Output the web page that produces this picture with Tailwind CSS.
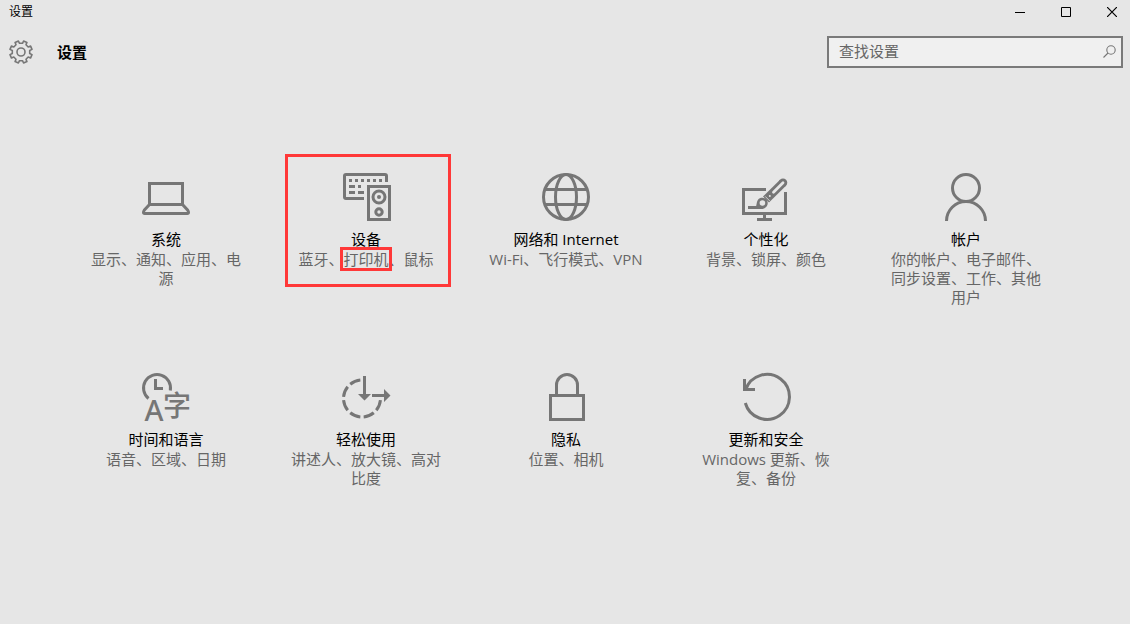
<!DOCTYPE html>
<html lang="zh-CN">
<head>
    <meta charset="UTF-8">
    <meta name="viewport" content="width=device-width, initial-scale=1.0">
    <title>设置</title>
    <script src="https://cdn.jsdelivr.net/npm/@tailwindcss/browser@4"></script>
</head>
<body class="min-h-screen bg-[#e6e6e6] text-black font-['Open_Sans','Noto_Sans_CJK_SC',sans-serif] text-[15px]">
    <!-- Title bar -->
    <div class="flex h-6 items-center justify-between pl-[9px]">
        <span class="text-xs">设置</span>
        <div class="flex gap-2.5">
            <button class="flex h-6 w-9 items-center justify-center" aria-label="最小化">
                <svg class="size-[10px]" viewBox="0 0 10 10" fill="none" stroke="#000"><path d="M0 5.5h10"/></svg>
            </button>
            <button class="flex h-6 w-9 items-center justify-center" aria-label="最大化">
                <svg class="size-[10px]" viewBox="0 0 10 10" fill="none" stroke="#000"><path d="M.5.5h9v9h-9z"/></svg>
            </button>
            <button class="flex h-6 w-9 items-center justify-center" aria-label="关闭">
                <svg class="size-[10px]" viewBox="0 0 10 10" fill="none" stroke="#000" stroke-width="1.2"><path d="M0 0l10 10M10 0L0 10"/></svg>
            </button>
        </div>
    </div>

    <!-- Header -->
    <header class="mt-3 flex h-8 items-center pl-[9px] pr-[7px]">
        <svg class="size-6" viewBox="0 0 24 24" fill="none" stroke="#767676" stroke-width="1.6" stroke-linejoin="round">
            <path d="M13.5 3.3L14.6 1L17.9 2.4L17 4.8L19.2 7L21.6 6.1L23 9.4L20.7 10.5V13.5L23 14.6L21.6 17.9L19.2 17L17 19.2L17.9 21.6L14.6 23L13.5 20.7H10.5L9.4 23L6.1 21.6L7 19.2L4.8 17L2.4 17.9L1 14.6L3.3 13.5V10.5L1 9.4L2.4 6.1L4.8 7L7 4.8L6.1 2.4L9.4 1L10.5 3.3Z"/>
            <circle cx="12" cy="12" r="4"/>
        </svg>
        <h1 class="ml-6 font-bold">设置</h1>
        <form class="relative ml-auto">
            <input type="search" aria-label="查找设置" placeholder="查找设置" class="block h-8 w-[296px] border-2 border-[#7a7a7a] bg-[#f0f0f0] pb-0.5 pl-2.5 pr-8 outline-none placeholder:text-[#666]">
            <svg class="absolute right-[7px] top-[9px] size-[13px]" viewBox="0 0 13 13" fill="none" stroke="#767676" stroke-width="1.1"><circle cx="8" cy="5" r="4.2"/><path d="M5 8L.5 12.5"/></svg>
        </form>
    </header>

    <!-- Categories -->
    <main class="mt-[105px] grid grid-cols-[repeat(auto-fill,200px)] auto-rows-[200px] pl-[66px] pr-16 text-center">
        <a href="#" class="relative flex flex-col items-center px-6">
            <svg class="size-12" viewBox="0 0 48 48" fill="none" stroke="#767676" stroke-width="3">
                <path d="M7.5 31.5v-21h33v21zM7.5 31.5L2.2 37.3Q1.5 38.2 1.5 39.3Q1.5 40.5 2.7 40.5H45.3Q46.5 40.5 46.5 39.3Q46.5 38.2 45.8 37.3L40.5 31.5"/>
            </svg>
            <h2 class="mt-2 mb-px leading-5">系统</h2>
            <p class="leading-[19px] text-[#666]">显示、通知、应用、电源</p>
        </a>

        <a href="#" class="relative flex flex-col items-center px-6">
            <span class="absolute -top-[19px] left-[19px] right-[15px] h-[133px] border-3 border-[#ff3838]"></span>
            <svg class="size-12 overflow-visible" viewBox="0 0 48 48" fill="none" stroke="#767676" stroke-width="3">
                <path d="M44.5 9V3Q44.5 1.5 43 1.5H4Q2.5 1.5 2.5 3V24Q2.5 25.5 4 25.5H22"/>
                <path fill="#767676" stroke="none" d="M7 6h3v3H7zM13 6h3v3h-3zM19 6h3v3h-3zM25 6h3v3h-3zM31 6h3v3h-3zM37 6h3v3h-3zM7 12h6v3H7zM16 12h3v3h-3zM7 18h6v3H7zM16 18h6v3h-6z"/>
                <path d="M26.5 13.5h21v33h-21z"/>
                <circle cx="37" cy="24" r="6"/>
                <circle cx="37" cy="24" r="2" fill="#767676" stroke="none"/>
                <circle cx="37" cy="39" r="3.2"/>
            </svg>
            <h2 class="mt-2 mb-px leading-5">设备</h2>
            <p class="leading-[19px] text-[#666]">蓝牙、<span class="relative">打印机<span class="absolute -inset-x-[3px] -inset-y-[2px] border-3 border-[#ff3838]"></span></span>、鼠标</p>
        </a>

        <a href="#" class="relative flex flex-col items-center px-5">
            <svg class="size-12" viewBox="0 0 48 48" fill="none" stroke="#767676" stroke-width="3">
                <circle cx="24" cy="24" r="22.5"/>
                <ellipse cx="24" cy="24" rx="10.5" ry="22.5"/>
                <path d="M3 16.5h42M3 31.5h42"/>
            </svg>
            <h2 class="mt-2 mb-px leading-5">网络和 Internet</h2>
            <p class="leading-[19px] whitespace-nowrap text-[#666]">Wi-Fi、飞行模式、VPN</p>
        </a>

        <a href="#" class="relative flex flex-col items-center px-6">
            <svg class="size-12" viewBox="0 0 48 48" fill="none" stroke="#767676" stroke-width="3">
                <path d="M24 16.5H1.5v24h42V19M22.5 40.5v6M15 46.5h15"/>
                <path d="M6 34.5h14"/>
                <path d="M24 26.5L41 9.8" stroke-width="8.5"/>
                <circle cx="41" cy="9.800" r="4.250" fill="#767676" stroke="none"/>
                <path d="M31.5 19.3L41 9.8" stroke="#e6e6e6" stroke-width="2.8" stroke-linecap="round"/>
                <path d="M23.200 23.400l4.600 4.600" stroke="#e6e6e6" stroke-width=".8"/>
                <circle cx="27.800" cy="23" r="1" fill="#e6e6e6" stroke="none"/>
                <path d="M12 35.500C15.500 33.500 13.800 30 16 26.800C18.200 24 22.500 24.200 24.800 27C27 30 25.400 36 19 36H12z" fill="#767676" stroke="none"/>
                <circle cx="20.400" cy="30" r="2.800" fill="#e6e6e6" stroke="none"/>
            </svg>
            <h2 class="mt-2 mb-px leading-5">个性化</h2>
            <p class="leading-[19px] text-[#666]">背景、锁屏、颜色</p>
        </a>

        <a href="#" class="relative flex flex-col items-center px-6">
            <svg class="size-12" viewBox="0 0 48 48" fill="none" stroke="#767676" stroke-width="3">
                <circle cx="24" cy="15" r="13.5"/>
                <path d="M4.500 48a19.500 19.500 0 0 1 39 0"/>
            </svg>
            <h2 class="mt-2 mb-px leading-5">帐户</h2>
            <p class="leading-[19px] text-[#666]">你的帐户、电子邮件、同步设置、工作、其他用户</p>
        </a>

        <a href="#" class="relative flex flex-col items-center px-6">
            <svg class="size-12 overflow-visible" viewBox="0 0 48 48" fill="none" stroke="#767676" stroke-width="3">
                <path d="M6.500 25.500A13.500 13.500 0 1 1 28.300 17.500M13.500 6v9.500H21"/>
                <text x="12" y="48" text-anchor="middle" font-family="Noto Sans" font-size="29" font-weight="500" fill="#767676" stroke="none">A</text>
                <text x="35" y="43" text-anchor="middle" font-family="Noto Sans CJK SC" font-size="28" font-weight="500" fill="#767676" stroke="none">字</text>
            </svg>
            <h2 class="mt-2 mb-px leading-5">时间和语言</h2>
            <p class="leading-[19px] text-[#666]">语音、区域、日期</p>
        </a>

        <a href="#" class="relative flex flex-col items-center px-6">
            <svg class="size-12 overflow-visible" viewBox="0 0 48 48" fill="none" stroke="#767676" stroke-width="3">
                <path d="M38.500 25.500A18.500 18.500 0 1 1 20 7" pathLength="60" stroke-dasharray="7.600 2.400" stroke-dashoffset="-1.200"/>
                <path d="M22.500 3v19M30 22.500h13"/>
                <path d="M16 21h13l-6.500 6.500zM42 16l6.500 6.500L42 29z" fill="#767676" stroke="none"/>
            </svg>
            <h2 class="mt-2 mb-px leading-5">轻松使用</h2>
            <p class="leading-[19px] text-[#666]">讲述人、放大镜、高对比度</p>
        </a>

        <a href="#" class="relative flex flex-col items-center px-6">
            <svg class="size-12" viewBox="0 0 48 48" fill="none" stroke="#767676" stroke-width="3">
                <path d="M8.500 22.500h33v24h-33zM14.500 22.500V12a10.500 10.500 0 0 1 21 0v10.500"/>
            </svg>
            <h2 class="mt-2 mb-px leading-5">隐私</h2>
            <p class="leading-[19px] text-[#666]">位置、相机</p>
        </a>

        <a href="#" class="relative flex flex-col items-center px-6">
            <svg class="size-12 overflow-visible" viewBox="0 0 48 48" fill="none" stroke="#767676" stroke-width="3">
                <path d="M3.700 16.500A22.500 22.500 0 1 1 3.300 30M2.500 6v10.500H13"/>
            </svg>
            <h2 class="mt-2 mb-px leading-5">更新和安全</h2>
            <p class="leading-[19px] text-[#666]">Windows 更新、恢复、备份</p>
        </a>
    </main>
</body>
</html>
